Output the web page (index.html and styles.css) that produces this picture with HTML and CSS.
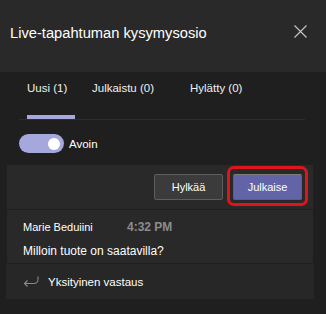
FILE: index.html
```html
<!DOCTYPE html>
<html lang="fi">
  <head>
    <meta charset="UTF-8" />
    <meta name="viewport" content="width=device-width, initial-scale=1.0" />
    <title>Live-tapahtuman kysymysosio</title>
    <link rel="stylesheet" href="styles.css">
  </head>
  <body>
    <header class="header">
      <h1 class="title">Live-tapahtuman kysymysosio</h1>
      <button class="close" aria-label="Sulje">
        <svg width="13" height="13" viewBox="0 0 13 13">
          <path d="M0.5 0.5 L12.5 12.5 M12.5 0.5 L0.5 12.5" stroke="#c8c8c8" stroke-width="1.1" fill="none" />
        </svg>
      </button>
    </header>

    <nav class="tabs">
      <div class="tab active">Uusi (1)</div>
      <div class="tab">Julkaistu (0)</div>
      <div class="tab">Hylätty (0)</div>
    </nav>

    <div class="toggle-row">
      <span class="toggle"><span class="knob"></span></span>
      <span class="toggle-label">Avoin</span>
    </div>

    <section class="card">
      <div class="actions">
        <button class="btn">Hylkää</button>
        <button class="btn primary">Julkaise</button>
      </div>
      <div class="message">
        <div class="meta">
          <span class="name">Marie Beduiini</span>
          <span class="time">4:32 PM</span>
        </div>
        <p class="question">Milloin tuote on saatavilla?</p>
      </div>
    </section>

    <div class="reply">
      <svg width="16" height="11" viewBox="0 0 16 11">
        <path d="M15 0.5 V3.5 A4 4 0 0 1 11 7.5 H1.5 M4.5 4.5 L1.5 7.5 L4.5 10.5" stroke="#8a8a8a" stroke-width="1.1" fill="none" />
      </svg>
      <span class="reply-text">Yksityinen vastaus</span>
    </div>
  </body>
</html>
```

FILE: styles.css
```css
body {
  margin: 0;
  background: #1f1f1f;
  color: #ffffff;
  font-family: "Liberation Sans", Arial, sans-serif;
}

.header {
  height: 72px;
  box-sizing: border-box;
  background: #292929;
  display: flex;
  align-items: center;
  justify-content: space-between;
  padding: 0 19px 6px 10px;
}

.title {
  margin: 0;
  font-size: 14.7px;
  font-weight: normal;
  line-height: 20px;
}

.close {
  background: none;
  border: none;
  padding: 0;
  margin-bottom: 3px;
  display: flex;
}

.tabs {
  margin: 0 21px 0 19px;
  padding-left: 8px;
  display: grid;
  grid-template-columns: 65px 98px auto;
  border-bottom: 1px solid #2d2d2d;
}

.tab {
  position: relative;
  padding: 8px 0 23px;
  font-size: 11.5px;
  line-height: 16px;
  color: #f0f0f0;
}

.tab.active::after {
  content: "";
  position: absolute;
  left: 0;
  bottom: 0;
  width: 48px;
  height: 4px;
  background: #a6a7dc;
}

.toggle-row {
  display: flex;
  align-items: center;
  margin-top: 14px;
  padding-left: 19px;
}

.toggle {
  width: 45px;
  height: 19px;
  border-radius: 10px;
  background: #a6a7dc;
  display: flex;
  align-items: center;
  justify-content: flex-end;
  padding-right: 4px;
  box-sizing: border-box;
}

.knob {
  width: 12px;
  height: 12px;
  border-radius: 50%;
  background: #ffffff;
}

.toggle-label {
  margin-left: 5px;
  font-size: 11.5px;
}

.card {
  margin: 12px 13px 0 7px;
  background: #292929;
}

.actions {
  display: flex;
  justify-content: flex-end;
  gap: 10px;
  padding: 9px 11px 9px;
  border-bottom: 1px solid #202020;
}

.btn {
  position: relative;
  width: 69px;
  height: 26px;
  box-sizing: border-box;
  border: 1px solid #5e5e5e;
  border-radius: 2px;
  background: #3b3b3b;
  color: #ffffff;
  font-family: inherit;
  font-size: 11px;
  padding: 0;
}

.btn.primary {
  background: #6264a7;
  border-color: #5a5c99;
  border-top-color: #7c7c7c;
}

/* red highlight drawn round the publish button */
.btn.primary::after {
  content: "";
  position: absolute;
  top: -9px;
  right: -7px;
  bottom: -7px;
  left: -7px;
  border: 3px solid #e0141b;
  border-radius: 7px;
}

.message {
  padding: 9px 16px 4px;
}

.meta {
  display: flex;
  align-items: baseline;
  line-height: 16px;
}

.name {
  font-size: 11px;
  width: 104px;
}

.time {
  font-size: 12px;
  font-weight: bold;
  color: #8c8c8c;
}

.question {
  margin: 8px 0 0;
  font-size: 12px;
  line-height: 16px;
}

.reply {
  margin: 0 12px 0 6px;
  height: 36px;
  background: #272727;
  display: flex;
  align-items: center;
  padding-left: 17px;
  border-top: 1px solid #1f1f1f;
  box-sizing: border-box;
}

.reply-text {
  margin-left: 9px;
  font-size: 11.5px;
}
```
